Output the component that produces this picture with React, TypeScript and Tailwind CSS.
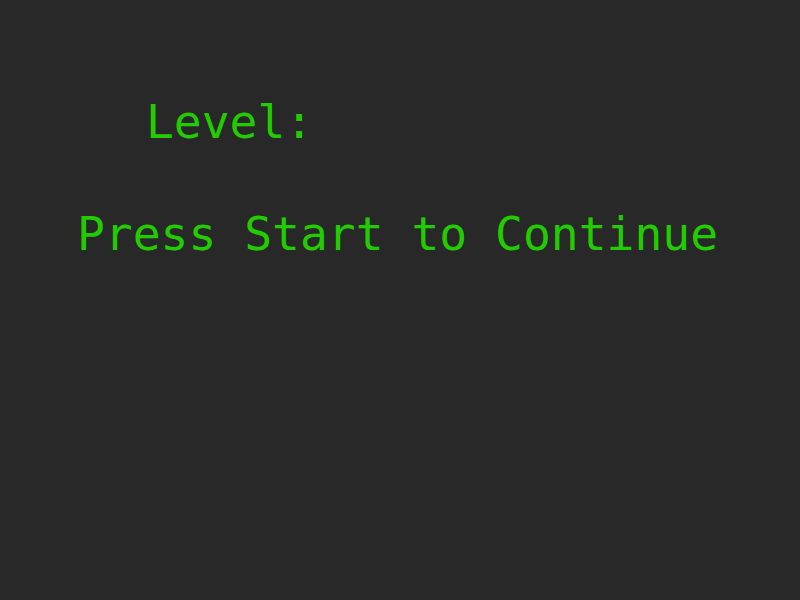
export default function App() {
  return (
    <div
      className="w-[800px] h-[600px] bg-[#282828] text-[#22cc00] text-[46.3px] leading-none flex flex-col"
      style={{ fontFamily: '"DejaVu Sans Mono", monospace' }}
    >
      <div className="pt-[99px] pl-[146px] whitespace-pre">Level: </div>
      <div className="mt-[66px] pl-[77px] whitespace-pre">Press Start to Continue</div>
    </div>
  );
}
